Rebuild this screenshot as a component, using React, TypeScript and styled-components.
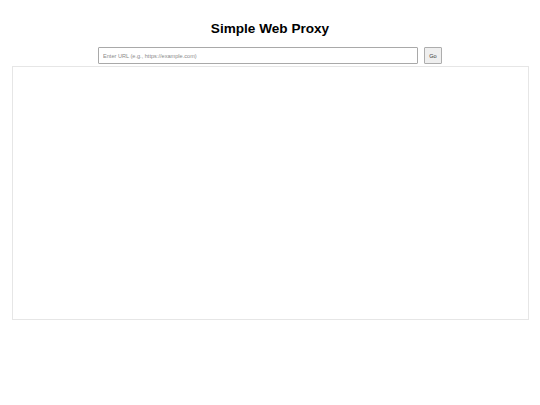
import * as React from 'react'
import styled, { createGlobalStyle } from 'styled-components'

const GlobalStyle = createGlobalStyle`
  html, body {
    margin: 0;
    padding: 0;
    background: #ffffff;
    font-family: "Liberation Sans", Arial, sans-serif;
  }
`

const S = {
  Page: styled.div`
    padding: 0 12px;
    display: flex;
    flex-direction: column;
    align-items: center;
  `,
  Title: styled.h1`
    margin: 19px 0 0;
    height: 20px;
    line-height: 20px;
    font-size: 13.6px;
    font-weight: bold;
    color: #000;
  `,
  Bar: styled.form`
    margin-top: 8px;
    display: flex;
    gap: 6px;
    height: 17px;
  `,
  Input: styled.input`
    width: 320px;
    height: 17px;
    box-sizing: border-box;
    border: 1px solid #a9a9a9;
    border-radius: 1px;
    padding: 0 4px;
    font-family: "Liberation Sans", Arial, sans-serif;
    font-size: 5.6px;
    outline: none;
    &::placeholder {
      color: #8a8a8a;
    }
  `,
  Button: styled.button`
    width: 18px;
    height: 17px;
    box-sizing: border-box;
    padding: 0;
    border: 1px solid #adadad;
    border-radius: 1px;
    background: #efefef;
    color: #333;
    font-family: "Liberation Sans", Arial, sans-serif;
    font-size: 5.6px;
  `,
  Frame: styled.div`
    margin: 2px -1px 0 0;
    align-self: stretch;
    height: 254px;
    box-sizing: border-box;
    border: 1px solid #e6e6e6;
    background: #fff;
  `
}

export default function App() {
  const [url, setUrl] = React.useState<string>('')

  const handleSubmit = (event: React.FormEvent) => {
    event.preventDefault()
  }

  return (
    <S.Page>
      <GlobalStyle />
      <S.Title>Simple Web Proxy</S.Title>
      <S.Bar onSubmit={handleSubmit}>
        <S.Input value={url}
          onChange={(event: React.ChangeEvent<HTMLInputElement>) => setUrl(event.target.value)}
          placeholder="Enter URL (e.g., https://example.com)"
        />
        <S.Button type="submit">Go</S.Button>
      </S.Bar>
      <S.Frame />
    </S.Page>
  )
}
